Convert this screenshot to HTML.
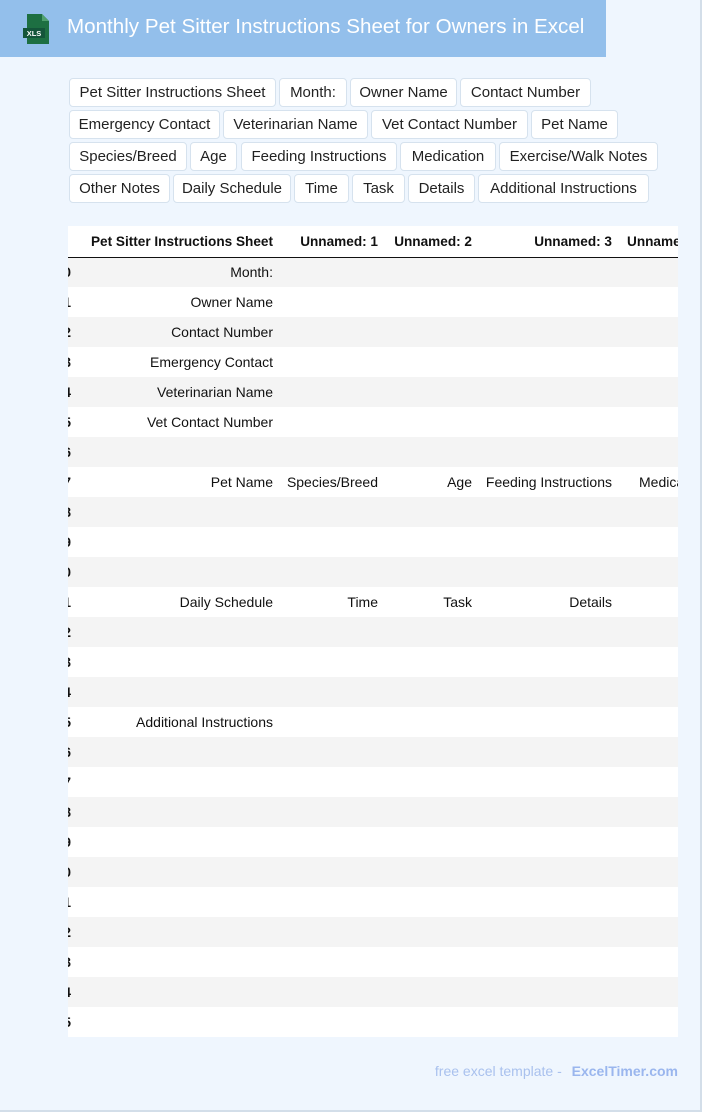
<!DOCTYPE html>
<html><head><meta charset="utf-8"><style>
*{box-sizing:border-box;margin:0;padding:0}
body{width:702px;height:1112px;background:#eff6fe;font-family:"Liberation Sans",Arial,sans-serif;position:relative;overflow:hidden;border-right:2px solid #d3dee9;border-bottom:2px solid #d3dee9}
.hdr{position:absolute;left:0;top:0;width:606px;height:57px;background:#93bfeb}
.hdr .t{position:absolute;left:67px;top:15px;color:#fff;font-size:20.6px;white-space:nowrap}
.tag{position:absolute;height:29px;background:#fff;border:1px solid #d6e2ee;border-radius:4px;font-size:15px;color:#222;text-align:center;line-height:28px;white-space:nowrap;overflow:hidden}
.tw{position:absolute;left:68px;top:226px;width:610px;height:811px;overflow:hidden;background:#fff}
table{position:absolute;left:-136px;top:0;width:810px;border-collapse:collapse;font-size:14px;color:#111;table-layout:fixed}
td,th{height:30px;padding:0 10px 0 0;text-align:right;white-space:nowrap;overflow:hidden}
th{font-weight:bold;height:31px;border-bottom:1.5px solid #111;font-size:13.6px}
tr:nth-child(even) td{background:#f4f4f4}
td:first-child,th:first-child{font-weight:bold}
.ft{position:absolute;right:22px;top:1063px;font-size:14px;color:#a9c1ee}
.ft b{color:#9ab6ee;margin-left:6px}
</style></head><body>
<div class="hdr">
<svg style="position:absolute;left:22px;top:13px" width="30" height="32" viewBox="0 0 30 32"><path d="M5 1h15l7 7v23H5z" fill="#1d6f42"/><path d="M20 1v7h7z" fill="#4fa06f"/><rect x="1" y="15" width="22" height="10" fill="#14553a"/><text x="12" y="23" font-size="7.5" fill="#fff" text-anchor="middle" font-family="Liberation Sans" font-weight="bold">XLS</text></svg>
<div class="t">Monthly Pet Sitter Instructions Sheet for Owners in Excel</div>
</div>
<div class="tag" style="left:69px;top:78px;width:207px">Pet Sitter Instructions Sheet</div>
<div class="tag" style="left:279px;top:78px;width:68px">Month:</div>
<div class="tag" style="left:350px;top:78px;width:107px">Owner Name</div>
<div class="tag" style="left:460px;top:78px;width:131px">Contact Number</div>
<div class="tag" style="left:69px;top:110px;width:151px">Emergency Contact</div>
<div class="tag" style="left:223px;top:110px;width:145px">Veterinarian Name</div>
<div class="tag" style="left:371px;top:110px;width:157px">Vet Contact Number</div>
<div class="tag" style="left:531px;top:110px;width:87px">Pet Name</div>
<div class="tag" style="left:69px;top:142px;width:118px">Species/Breed</div>
<div class="tag" style="left:190px;top:142px;width:47px">Age</div>
<div class="tag" style="left:241px;top:142px;width:156px">Feeding Instructions</div>
<div class="tag" style="left:400px;top:142px;width:96px">Medication</div>
<div class="tag" style="left:499px;top:142px;width:159px">Exercise/Walk Notes</div>
<div class="tag" style="left:69px;top:174px;width:101px">Other Notes</div>
<div class="tag" style="left:173px;top:174px;width:118px">Daily Schedule</div>
<div class="tag" style="left:294px;top:174px;width:55px">Time</div>
<div class="tag" style="left:352px;top:174px;width:53px">Task</div>
<div class="tag" style="left:408px;top:174px;width:67px">Details</div>
<div class="tag" style="left:478px;top:174px;width:171px">Additional Instructions</div>
<div class="tw"><table>
<colgroup><col style="width:149px"><col style="width:202px"><col style="width:105px"><col style="width:94px"><col style="width:140px"><col style="width:120px"></colgroup>
<tr><th></th><th>Pet Sitter Instructions Sheet</th><th>Unnamed: 1</th><th>Unnamed: 2</th><th>Unnamed: 3</th><th style="text-align:left;padding-left:5px">Unnamed: 4</th></tr>
<tr><td>0</td><td>Month:</td><td></td><td></td><td></td><td></td></tr>
<tr><td>1</td><td>Owner Name</td><td></td><td></td><td></td><td></td></tr>
<tr><td>2</td><td>Contact Number</td><td></td><td></td><td></td><td></td></tr>
<tr><td>3</td><td>Emergency Contact</td><td></td><td></td><td></td><td></td></tr>
<tr><td>4</td><td>Veterinarian Name</td><td></td><td></td><td></td><td></td></tr>
<tr><td>5</td><td>Vet Contact Number</td><td></td><td></td><td></td><td></td></tr>
<tr><td>6</td><td></td><td></td><td></td><td></td><td></td></tr>
<tr><td>7</td><td>Pet Name</td><td>Species/Breed</td><td>Age</td><td>Feeding Instructions</td><td style="text-align:left;padding-left:17px">Medication</td></tr>
<tr><td>8</td><td></td><td></td><td></td><td></td><td></td></tr>
<tr><td>9</td><td></td><td></td><td></td><td></td><td></td></tr>
<tr><td>10</td><td></td><td></td><td></td><td></td><td></td></tr>
<tr><td>11</td><td>Daily Schedule</td><td>Time</td><td>Task</td><td>Details</td><td></td></tr>
<tr><td>12</td><td></td><td></td><td></td><td></td><td></td></tr>
<tr><td>13</td><td></td><td></td><td></td><td></td><td></td></tr>
<tr><td>14</td><td></td><td></td><td></td><td></td><td></td></tr>
<tr><td>15</td><td>Additional Instructions</td><td></td><td></td><td></td><td></td></tr>
<tr><td>16</td><td></td><td></td><td></td><td></td><td></td></tr>
<tr><td>17</td><td></td><td></td><td></td><td></td><td></td></tr>
<tr><td>18</td><td></td><td></td><td></td><td></td><td></td></tr>
<tr><td>19</td><td></td><td></td><td></td><td></td><td></td></tr>
<tr><td>20</td><td></td><td></td><td></td><td></td><td></td></tr>
<tr><td>21</td><td></td><td></td><td></td><td></td><td></td></tr>
<tr><td>22</td><td></td><td></td><td></td><td></td><td></td></tr>
<tr><td>23</td><td></td><td></td><td></td><td></td><td></td></tr>
<tr><td>24</td><td></td><td></td><td></td><td></td><td></td></tr>
<tr><td>25</td><td></td><td></td><td></td><td></td><td></td></tr>
</table></div>
<div class="ft">free excel template - <b>ExcelTimer.com</b></div>
</body></html>
